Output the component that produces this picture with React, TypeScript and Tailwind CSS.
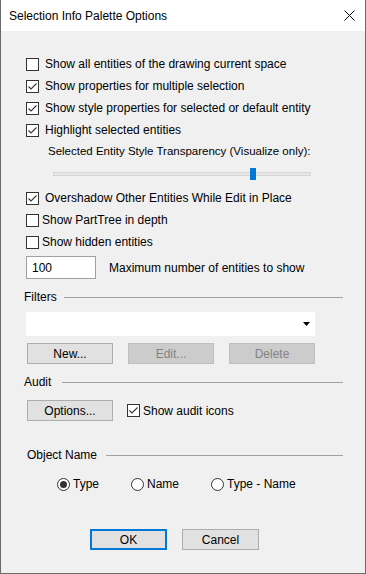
import React from "react";

function Box({ checked }: { checked?: boolean }) {
  return (
    <span className="flex h-[13px] w-[13px] shrink-0 items-center justify-center border border-[#333333] bg-white">
      {checked && (
        <svg width="11" height="11" viewBox="0 0 11 11">
          <polyline points="1.5,5.5 4,8 9.5,2.5" fill="none" stroke="#333333" strokeWidth="1.1" />
        </svg>
      )}
    </span>
  );
}

function Check({ label, checked, gap = "gap-[6px]" }: { label: string; checked?: boolean; gap?: string }) {
  return (
    <div className={`flex h-[22px] items-center ${gap}`}>
      <Box checked={checked} />
      <span>{label}</span>
    </div>
  );
}

function Radio({ label, on, w }: { label: string; on?: boolean; w: string }) {
  return (
    <div className={`flex items-center gap-[3px] ${w}`}>
      <span className="flex h-[13px] w-[13px] items-center justify-center rounded-full border border-[#333333] bg-white">
        {on && <span className="h-[7px] w-[7px] rounded-full bg-[#333333]" />}
      </span>
      <span>{label}</span>
    </div>
  );
}

function Group({ label, line }: { label: string; line: string }) {
  return (
    <div className="flex h-[20px] items-center">
      <span>{label}</span>
      <span className={`h-px flex-1 bg-[#a0a0a0] ${line}`} />
    </div>
  );
}

function Btn({ label, disabled }: { label: string; disabled?: boolean }) {
  const cls = disabled
    ? "border border-[#bfbfbf] bg-[#cccccc] text-[#838383]"
    : "border border-[#adadad] bg-[#e1e1e1]";
  return <div className={`flex h-[21px] w-[86px] items-center justify-center ${cls}`}>{label}</div>;
}

export default function App() {
  return (
    <div
      className="flex h-[574px] w-[366px] flex-col border-x border-b border-[#6b6b6b] bg-[#f0f0f0] text-[12px] leading-none text-black"
      style={{ fontFamily: '"Liberation Sans", Arial, sans-serif' }}
    >
      {/* title bar */}
      <div className="flex h-[31px] shrink-0 items-center justify-between bg-white pl-[8px] pr-[10px]">
        <span>Selection Info Palette Options</span>
        <svg width="11" height="11" viewBox="0 0 11 11">
          <path d="M0.5 0.5 L10.5 10.5 M10.5 0.5 L0.5 10.5" stroke="#000" strokeWidth="1" />
        </svg>
      </div>

      <div className="flex flex-col pl-[25px] pr-[22px]">
        <div className="mt-[22px]">
          <Check label="Show all entities of the drawing current space" />
          <Check label="Show properties for multiple selection" checked />
          <Check label="Show style properties for selected or default entity" checked />
          <Check label="Highlight selected entities" checked />
        </div>
        <div className="flex h-[22px] items-center pl-[22px] text-[11.5px]">
          Selected Entity Style Transparency (Visualize only):
        </div>
        <div className="flex h-[22px] items-center pl-[27px]">
          <div className="relative h-[4px] w-[258px] border border-[#d6d6d6] bg-[#e7e7e7]">
            <span className="absolute left-[196px] top-[-5px] h-[12px] w-[6px] bg-[#0078d7]" />
          </div>
        </div>

        <div className="mt-[2px]">
          <Check label="Overshadow Other Entities While Edit in Place" checked />
          <Check label="Show PartTree in depth" gap="gap-[3px]" />
          <Check label="Show hidden entities" gap="gap-[3px]" />
        </div>
        <div className="mt-[3px] flex items-center gap-[13px]">
          <div className="flex h-[23px] w-[70px] items-center border border-[#a0a0a0] bg-white pl-[5px]">100</div>
          <span>Maximum number of entities to show</span>
        </div>

        <div className="-ml-[2px] mt-[8px]">
          <Group label="Filters" line="ml-[7px]" />
        </div>
        <div className="mt-[5px] flex h-[24px] w-[289px] items-center justify-end bg-white pr-[5px]">
          <svg width="7" height="4" viewBox="0 0 7 4">
            <path d="M0 0 H7 L3.5 4 Z" fill="#000" />
          </svg>
        </div>
        <div className="ml-[1px] mt-[7px] flex gap-[15px]">
          <Btn label="New..." />
          <Btn label="Edit..." disabled />
          <Btn label="Delete" disabled />
        </div>

        <div className="-ml-[2px] mt-[8px]">
          <Group label="Audit" line="ml-[11px]" />
        </div>
        <div className="ml-[1px] mt-[8px] flex items-center gap-[14px]">
          <Btn label="Options..." />
          <div className="flex items-center gap-[3px]">
            <Box checked />
            <span>Show audit icons</span>
          </div>
        </div>

        <div className="ml-[1px] mt-[24px]">
          <Group label="Object Name" line="ml-[9px]" />
        </div>
        <div className="ml-[31px] mt-[9px] flex h-[20px] items-center">
          <Radio label="Type" on w="w-[74px]" />
          <Radio label="Name" w="w-[80px]" />
          <Radio label="Type - Name" w="w-auto" />
        </div>

        <div className="ml-[64px] mt-[35px] flex gap-[15px]">
          <div className="flex h-[21px] w-[77px] items-center justify-center border-2 border-[#0078d7] bg-[#e1e1e1]">OK</div>
          <div className="flex h-[21px] w-[77px] items-center justify-center border border-[#adadad] bg-[#e1e1e1]">Cancel</div>
        </div>
      </div>
    </div>
  );
}
